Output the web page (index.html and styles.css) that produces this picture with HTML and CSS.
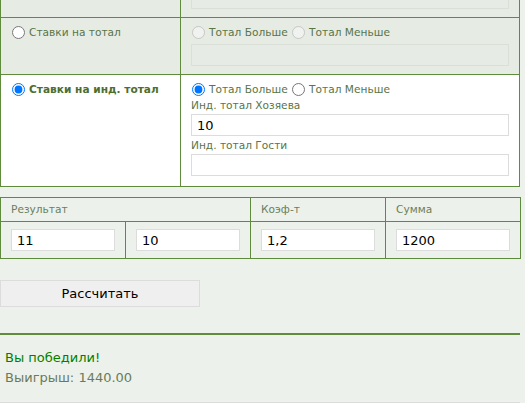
FILE: index.html
```html
<!DOCTYPE html>
<html lang="ru">
<head>
  <meta charset="UTF-8">
  <meta name="viewport" content="width=device-width, initial-scale=1.0">
  <title>Калькулятор ставок</title>
  <link rel="stylesheet" href="styles.css">
</head>
<body>
  <div class="calc">
    <table class="bet-types">
      <colgroup>
        <col class="col-type">
        <col>
      </colgroup>
      <tr class="row-off">
        <td></td>
        <td>
          <input type="text" class="field" disabled>
        </td>
      </tr>
      <tr class="row-off">
        <td>
          <label class="opt"><input type="radio" name="type"> Ставки на тотал</label>
        </td>
        <td>
          <div class="opt-line">
            <label class="opt"><input type="radio" name="total" disabled> Тотал Больше</label>
            <label class="opt"><input type="radio" name="total" disabled> Тотал Меньше</label>
          </div>
          <input type="text" class="field" disabled>
        </td>
      </tr>
      <tr class="row-on">
        <td>
          <label class="opt opt-bold"><input type="radio" name="type" checked> Ставки на инд. тотал</label>
        </td>
        <td>
          <div class="opt-line">
            <label class="opt"><input type="radio" name="ind" checked> Тотал Больше</label>
            <label class="opt"><input type="radio" name="ind"> Тотал Меньше</label>
          </div>
          <div class="field-label">Инд. тотал Хозяева</div>
          <input type="text" class="field" value="10">
          <div class="field-label">Инд. тотал Гости</div>
          <input type="text" class="field">
        </td>
      </tr>
    </table>

    <table class="result-table">
      <colgroup>
        <col class="col-score">
        <col class="col-score">
        <col class="col-num">
        <col class="col-num">
      </colgroup>
      <tr class="head">
        <td colspan="2">Результат</td>
        <td>Коэф-т</td>
        <td>Сумма</td>
      </tr>
      <tr class="values">
        <td><input type="text" class="field" value="11"></td>
        <td><input type="text" class="field" value="10"></td>
        <td><input type="text" class="field" value="1,2"></td>
        <td><input type="text" class="field" value="1200"></td>
      </tr>
    </table>

    <button type="button" class="calc-button">Рассчитать</button>

    <div class="result">
      <div class="result-win">Вы победили!</div>
      <div class="result-sum">Выигрыш: 1440.00</div>
    </div>
    <div class="after"></div>
  </div>
</body>
</html>
```

FILE: styles.css
```css
body {
  margin: 0;
  background-color: #edf1eb;
  font-family: "DejaVu Sans", Verdana, sans-serif;
  font-size: 10.6px;
  color: #5a7548;
}

.calc {
  width: 520px;
  margin-top: -20px;
}

table {
  width: 520px;
  border-collapse: collapse;
  table-layout: fixed;
}

td {
  border: 1px solid #5f8b3c;
  vertical-align: top;
}

.col-type {
  width: 180px;
}

.bet-types td {
  padding: 6px 10px 8px 10px;
}

.row-off {
  background-color: #e6ebe4;
}

.row-on {
  background-color: #fff;
}

.opt-line {
  height: 16px;
  line-height: 16px;
  margin-bottom: 4px;
}

.bet-types .row-on .opt-line {
  margin-bottom: 0;
}

.opt {
  display: inline-flex;
  align-items: center;
  height: 16px;
  line-height: 16px;
  white-space: nowrap;
}

.opt input {
  width: 13px;
  height: 13px;
  margin: 0 4px 0 1px;
}

.opt-bold {
  font-weight: bold;
  color: #4e6e30;
}

.field-label {
  line-height: 14px;
  margin-top: 1px;
}

.field {
  display: block;
  box-sizing: border-box;
  width: 100%;
  height: 22px;
  margin: 2px 0 2px 0;
  padding: 2px 5px;
  border: 1px solid #dcdcdc;
  background-color: #fff;
  font-family: "DejaVu Sans", Verdana, sans-serif;
  font-size: 13px;
  color: #000;
  outline: none;
}

.row-off .field {
  margin: 0;
  background-color: #e7ebe5;
  border-color: #dadfd8;
}

.result-table {
  margin-top: 10px;
}

.col-score {
  width: 125px;
}

.col-num {
  width: 135px;
}

.result-table .head td {
  padding: 4px 10px;
  line-height: 15px;
  color: #6a7f5c;
}

.result-table .values td {
  padding: 7px 10px 7px 10px;
}

.result-table .values .field {
  margin: 0;
}

.calc-button {
  display: block;
  width: 200px;
  height: 27px;
  margin-top: 21px;
  background-color: #efefef;
  border: 1px solid #dcdcdc;
  font-family: "DejaVu Sans", Verdana, sans-serif;
  font-size: 13px;
  color: #000;
  padding: 0;
}

.result {
  margin-top: 26px;
  border-top: 2px solid #5f8b3c;
  padding: 13px 5px 14px 5px;
  font-size: 13px;
  line-height: 20px;
}

.result-win {
  color: #008000;
}

.result-sum {
  color: #6b7b57;
}

.after {
  border-top: 1px solid #dcdcdc;
  height: 20px;
}
```
